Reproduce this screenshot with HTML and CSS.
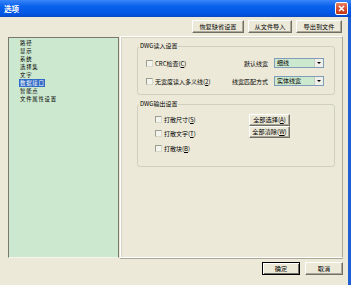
FILE: index.html
```html
<!DOCTYPE html>
<html>
    <head>
        <title>选项</title>
        <link rel="stylesheet" href="styles.css">
    </head>
    <body>
        <div class="titlebar">
            <span class="title">选项</span>
            <span class="close">
                <svg width="13" height="13" viewBox="0 0 13 13">
                    <path d="M4 4 L9 9 M9 4 L4 9" stroke="#fff" stroke-width="1.6" />
                </svg>
            </span>
        </div>
        <div class="frame">
            <div class="toolbar">
                <button class="btn w52">恢复缺省设置</button>
                <button class="btn w44">从文件导入</button>
                <button class="btn w46">导出到文件</button>
            </div>
            <div class="main">
                <ul class="tree">
                    <li>路径</li>
                    <li>显示</li>
                    <li>系统</li>
                    <li>选择集</li>
                    <li>文字</li>
                    <li><span class="selected">数据接口</span></li>
                    <li>智能点</li>
                    <li>文件属性设置</li>
                </ul>
                <div class="panel">
                    <fieldset class="group read">
                        <legend>DWG读入设置</legend>
                        <div class="read-grid">
                            <label class="check"><span class="box"></span><span>CRC检查(<u>C</u>)</span></label>
                            <span class="field-label">默认线宽</span>
                            <span class="combo"><span class="combo-text">细线</span><span class="arrow"></span></span>
                            <label class="check"><span class="box"></span><span>无宽度读入多义线(<u>2</u>)</span></label>
                            <span class="field-label">线宽匹配方式</span>
                            <span class="combo"><span class="combo-text">实体线宽</span><span class="arrow"></span></span>
                        </div>
                    </fieldset>
                    <fieldset class="group write">
                        <legend>DWG输出设置</legend>
                        <div class="write-row">
                            <div class="write-checks">
                                <label class="check"><span class="box"></span><span>打散尺寸(<u>S</u>)</span></label>
                                <label class="check"><span class="box"></span><span>打散文字(<u>T</u>)</span></label>
                                <label class="check"><span class="box"></span><span>打散块(<u>B</u>)</span></label>
                            </div>
                            <div class="write-buttons">
                                <button class="btn w41">全部选择(<u>A</u>)</button>
                                <button class="btn w41">全部清除(<u>W</u>)</button>
                            </div>
                        </div>
                    </fieldset>
                </div>
            </div>
            <div class="footer">
                <button class="btn w38 default">确定</button>
                <button class="btn w38">取消</button>
            </div>
        </div>
    </body>
</html>
```

FILE: styles.css
```css
html, body {
    margin: 0;
    padding: 0;
}
body {
    width: 351px;
    height: 285px;
    overflow: hidden;
    background: #ECE9D8;
    font-family: "Noto Sans CJK SC", "Noto Sans", sans-serif;
    font-size: 6px;
    color: #000;
}
.titlebar {
    height: 17px;
    box-sizing: border-box;
    display: flex;
    align-items: center;
    justify-content: space-between;
    padding: 0 3px 0 4px;
    background: linear-gradient(#3A86FA, #0B63EC 35%, #0054E3 85%, #0A47C0);
}
.title {
    color: #fff;
    font-weight: bold;
    font-size: 7.5px;
    line-height: 10px;
}
.close {
    width: 13px;
    height: 13px;
    box-sizing: border-box;
    border: 1px solid #fff;
    border-radius: 2px;
    background: linear-gradient(#E8815F, #D2482A 60%, #C13812);
    display: flex;
}
.close svg {
    margin: -1px;
}
.frame {
    height: 268px;
    border-right: 3px solid #1E5FD6;
}
.toolbar {
    height: 19px;
    box-sizing: border-box;
    display: flex;
    justify-content: flex-end;
    align-items: flex-start;
    gap: 4px;
    padding: 3px 6px 0 0;
}
.btn {
    height: 13px;
    box-sizing: border-box;
    padding: 0;
    margin: 0;
    font-family: inherit;
    font-size: 6.2px;
    line-height: 10px;
    color: #000;
    background: #ECE9D8;
    border: 1px solid;
    border-color: #fff #716F64 #716F64 #fff;
    box-shadow: inset -1px -1px 0 #ACA899;
}
.btn.default {
    outline: 1px solid #000;
    outline-offset: -1px;
    border-color: #000;
    box-shadow: inset 1px 1px 0 #fff, inset -1px -1px 0 #716F64;
}
.w52 { width: 52px; }
.w46 { width: 46px; }
.w44 { width: 44px; }
.w41 { width: 41px; height: 12px; }
.w38 { width: 38px; }
.main {
    display: flex;
    height: 222px;
    padding-left: 8px;
}
.tree {
    list-style: none;
    margin: 1px 0 0 0;
    padding: 1px 0 0 11px;
    width: 111px;
    height: 221px;
    box-sizing: border-box;
    background: #CCE8CF;
    border: 1px solid #7A786C;
    border-bottom-color: #F4F3EC;
    font-size: 5.4px;
    letter-spacing: 0.75px;
}
.tree li {
    line-height: 8px;
    height: 8px;
}
.selected {
    background: #316AC5;
    color: #fff;
    padding: 0 0 0 1px;
    margin-left: -1px;
}
.panel {
    margin-left: 1px;
    width: 223px;
    height: 222px;
    box-sizing: border-box;
    border: 1px solid;
    border-color: #fff #ACA899 #fff #fff;
    box-shadow: inset 1px 1px 0 #D6D3C4, 0 1px 0 #ACA899;
    padding: 5px 0 0 16px;
}
.group {
    margin: 0;
    width: 198px;
    box-sizing: border-box;
    border: 1px solid #D0D0BF;
    border-radius: 3px;
    padding: 0;
}
.group legend {
    padding: 0 1px;
    margin-left: 1px;
    line-height: 8px;
}
.read-grid {
    display: grid;
    grid-template-columns: 1fr auto 50px;
    grid-auto-rows: 10px;
    row-gap: 8px;
    column-gap: 6px;
    align-items: center;
    padding: 8px 10px 8px 8px;
}
.check {
    display: flex;
    align-items: center;
    gap: 2px;
    height: 10px;
    white-space: nowrap;
}
.box {
    width: 7px;
    height: 7px;
    box-sizing: border-box;
    background: #F4F4EE;
    border: 1px solid #9C9C90;
    border-right-color: #D8D8CC;
    border-bottom-color: #D8D8CC;
}
.field-label {
    text-align: right;
}
.combo {
    display: flex;
    height: 10px;
    box-sizing: border-box;
    border: 1px solid #7F9DB9;
    background: #CCE8CF;
}
.combo-text {
    flex: 1;
    line-height: 8px;
    padding-left: 2px;
}
.arrow {
    width: 8px;
    background: #F0F0EA;
    border-left: 1px solid #C8C8C0;
    display: flex;
    align-items: center;
    justify-content: center;
}
.arrow::after {
    content: "";
    border-left: 2px solid transparent;
    border-right: 2px solid transparent;
    border-top: 2px solid #000;
}
.write {
    margin-top: 5px;
    height: 67px;
}
.write-row {
    display: flex;
    padding: 6px 0 0 17px;
}
.write-checks {
    width: 94px;
    display: flex;
    flex-direction: column;
    gap: 4.5px;
}
.write-buttons {
    display: flex;
    flex-direction: column;
}
.footer {
    display: flex;
    justify-content: flex-end;
    gap: 5px;
    padding: 4px 5px 0 0;
}
```
